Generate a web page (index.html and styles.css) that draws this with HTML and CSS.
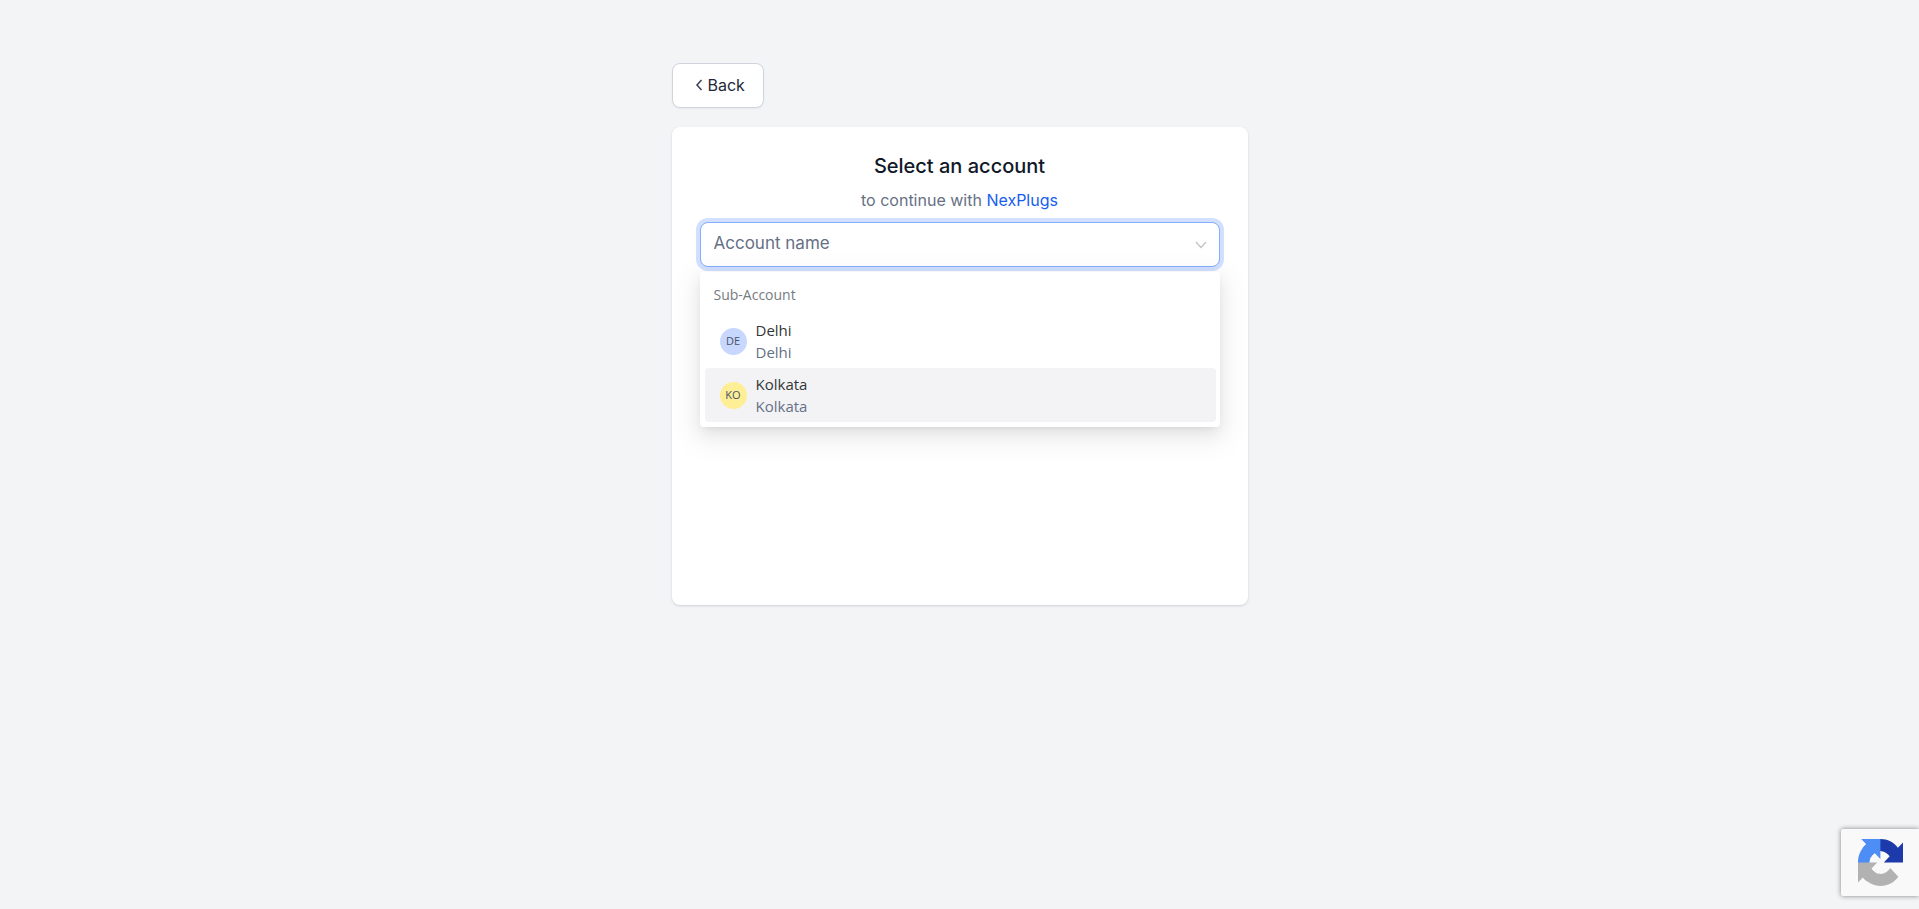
FILE: index.html
```html
<!DOCTYPE html>
<html lang="en">
<head>
<meta charset="utf-8">
<meta name="viewport" content="width=device-width, initial-scale=1">
<title>Select an account</title>
<link rel="stylesheet" href="styles.css">
</head>
<body>
<main class="page">
  <button class="back" type="button">
    <svg class="back-icon" viewBox="0 0 8 12" aria-hidden="true"><path d="M6.5 1 2 6 6.5 11"/></svg>
    Back
  </button>
  <section class="card">
    <h1 class="title">Select an account</h1>
    <p class="subtitle">to continue with <a class="link" href="#">NexPlugs</a></p>
    <div class="select">
      <input class="select-input" type="text" role="combobox" aria-label="Account name" aria-expanded="true" aria-controls="accounts" placeholder="Account name">
      <svg class="chevron" viewBox="0 0 12 8" aria-hidden="true"><path d="M1 1 6 6.5 11 1"/></svg>
      <div class="menu" id="accounts" role="listbox" aria-label="Accounts">
        <div class="menu-heading">Sub-Account</div>
        <button class="option" type="button" role="option">
          <span class="avatar avatar-blue">DE</span>
          <span class="option-text"><span>Delhi</span><span class="place">Delhi</span></span>
        </button>
        <button class="option option-active" type="button" role="option">
          <span class="avatar avatar-yellow">KO</span>
          <span class="option-text"><span>Kolkata</span><span class="place">Kolkata</span></span>
        </button>
      </div>
    </div>
  </section>
</main>
<aside class="captcha" aria-label="reCAPTCHA">
  <svg class="captcha-logo" viewBox="0 0 64 64" preserveAspectRatio="none" aria-hidden="true">
    <path fill="#1c3aa9" d="M64 31.955l-.033-1.37V4.687l-7.16 7.16C50.948 4.674 42.033.093 32.05.093c-10.4 0-19.622 4.96-25.458 12.64l11.736 11.86a15.55 15.55 0 0 1 4.754-5.334c2.05-1.6 4.952-2.906 8.968-2.906.485 0 .86.057 1.135.163 4.976.393 9.288 3.14 11.828 7.124l-8.307 8.307L64 31.953"/>
    <path fill="#4c8df6" d="M31.862.094l-1.37.033H4.594l7.16 7.16C4.58 13.147 0 22.06 0 32.046c0 10.4 4.96 19.622 12.64 25.458L24.5 45.768a15.55 15.55 0 0 1-5.334-4.754c-1.6-2.05-2.906-4.952-2.906-8.968 0-.485.057-.86.163-1.135.393-4.976 3.14-9.288 7.124-11.828l8.307 8.307L31.86.095"/>
    <path fill="#b2b2b2" d="M.001 32.045l.033 1.37v25.898l7.16-7.16c5.86 7.173 14.774 11.754 24.76 11.754 10.4 0 19.622-4.96 25.458-12.64l-11.736-11.86a15.55 15.55 0 0 1-4.754 5.334c-2.05 1.6-4.952 2.906-8.968 2.906-.485 0-.86-.057-1.135-.163-4.976-.393-9.288-3.14-11.828-7.124l8.307-8.307-32.004-.001"/>
  </svg>
</aside>
</body>
</html>
```
FILE: styles.css
```css
* { box-sizing: border-box; }

body {
  margin: 0;
  min-height: 100vh;
  background: #f2f4f6;
  color: #101828;
  font-family: Inter, "Liberation Sans", sans-serif;
}

.page {
  display: flex;
  flex-direction: column;
  align-items: flex-start;
  gap: 19px;
  width: 100%;
  max-width: 576px;
  margin: 0 auto;
  padding-top: 63px;
}

.back {
  display: flex;
  align-items: center;
  gap: 5px;
  padding: 9px 18px 10px 22px;
  border: 1px solid #d0d5dd;
  border-radius: 8px;
  background: #fff;
  box-shadow: 0 1px 2px rgba(16, 24, 40, 0.05);
  color: #1d2939;
  font: 400 16px/24px Inter, "Liberation Sans", sans-serif;
}

.back-icon {
  width: 8px;
  height: 12px;
  fill: none;
  stroke: #344054;
  stroke-width: 1.5;
}

.card {
  width: 100%;
  min-height: 478px;
  padding: 24px 28px;
  border-radius: 8px;
  background: #fff;
  box-shadow: 0 1px 3px rgba(16, 24, 40, 0.1), 0 1px 2px rgba(16, 24, 40, 0.06);
}

.title {
  margin: 0 0 7px;
  font-size: 20px;
  font-weight: 500;
  line-height: 30px;
  text-align: center;
}

.subtitle {
  margin: 0 0 10px;
  color: #667085;
  font-size: 16px;
  line-height: 24px;
  text-align: center;
}

.link {
  color: #155eef;
  text-decoration: none;
}

.select { position: relative; }

.select-input {
  display: block;
  width: 100%;
  height: 45px;
  padding: 0 40px 3px 13px;
  border: 1px solid #84adff;
  border-radius: 8px;
  outline: none;
  background: #fff;
  box-shadow: 0 0 0 4px #d1e0ff;
  color: #101828;
  font: 400 17px/24px Inter, "Liberation Sans", sans-serif;
}

.select-input::placeholder {
  color: #667085;
  opacity: 1;
}

.chevron {
  position: absolute;
  top: 19px;
  right: 13px;
  width: 12px;
  height: 8px;
  fill: none;
  stroke: #c2c2c2;
  stroke-width: 1.2;
}

.menu {
  position: absolute;
  top: 50px;
  left: 0;
  right: 0;
  padding: 5px 4px 5px 5px;
  border-radius: 4px;
  background: #fff;
  box-shadow: 0 3px 6px -4px rgba(0, 0, 0, 0.12), 0 6px 16px rgba(0, 0, 0, 0.08), 0 9px 28px 8px rgba(0, 0, 0, 0.05);
  font-family: "Open Sans", "Noto Sans", sans-serif;
}

.menu-heading {
  padding: 7px 9px 8px;
  color: #767c82;
  font-size: 14px;
  line-height: 22px;
}

.option {
  display: flex;
  align-items: center;
  gap: 9px;
  width: 100%;
  padding: 5px 15px;
  border: 0;
  border-radius: 4px;
  background: transparent;
  color: #333639;
  font: 400 15px/22px "Open Sans", "Noto Sans", sans-serif;
  text-align: left;
}

.option-active { background: #f3f3f5; }

.option-text {
  display: flex;
  flex-direction: column;
}

.place { color: #667085; }

.avatar {
  display: flex;
  align-items: center;
  justify-content: center;
  width: 27px;
  height: 27px;
  border-radius: 50%;
  color: #475467;
  font-size: 11px;
}

.avatar-blue { background: #c7d7fe; }
.avatar-yellow { background: #feee95; }

.captcha {
  position: fixed;
  right: 0;
  bottom: 13px;
  padding: 10px 16px 10px 17px;
  border-radius: 2px 0 0 2px;
  background: #f9f9f9;
  box-shadow: 0 0 5px gray;
}

.captcha-logo {
  display: block;
  width: 45px;
  height: 47px;
}
```
